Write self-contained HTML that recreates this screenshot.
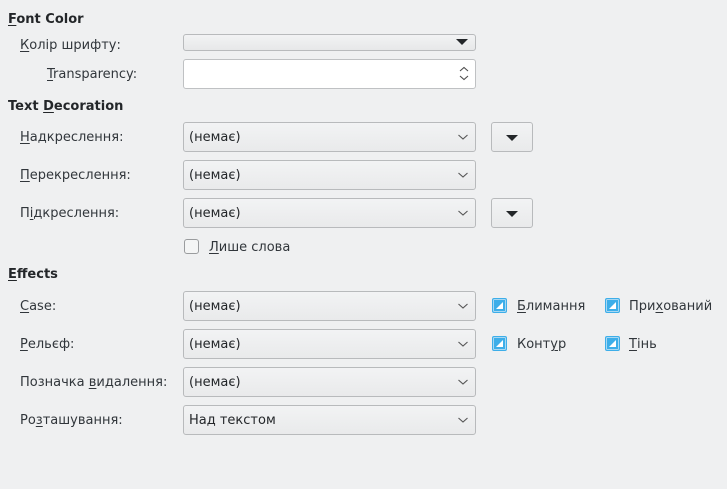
<!DOCTYPE html>
<html><head><meta charset="utf-8"><style>
body{margin:0;width:727px;height:489px;background:#eff0f1;font-family:"DejaVu Sans","Liberation Sans",sans-serif;font-size:13px;color:#31363b;position:relative;overflow:hidden}
.a{position:absolute;white-space:nowrap;line-height:16px;margin-top:2px}
.h{font-weight:bold;color:#232629}
u{text-decoration:underline;text-underline-offset:2px}
.cb{position:absolute;left:183px;width:291px;height:28px;border:1px solid #b8babc;border-radius:3px;background:linear-gradient(#f2f3f4,#e9eaeb);box-sizing:content-box}
.cb span{position:absolute;left:5px;top:7px;line-height:16px;color:#232629}
.cb svg{position:absolute;right:6px;top:10px}
.btn{position:absolute;left:491px;width:40px;height:28px;border:1px solid #b8babc;border-radius:3px;background:linear-gradient(#f2f3f4,#e9eaeb)}
.tri{position:absolute;width:0;height:0;border-left:6px solid transparent;border-right:6px solid transparent;border-top:6px solid #232629}
.ck{position:absolute;width:13px;height:13px;border:1px solid #3daee9;border-radius:2px;background:#3daee9;box-shadow:inset 0 0 0 1px #a8d8f3}
.ck:after{content:"";position:absolute;left:3px;top:3px;width:0;height:0;border-left:7px solid transparent;border-bottom:7px solid #fff}
</style></head><body>
<div class="a h" style="left:8px;top:10px"><u>F</u>ont Color</div>
<div class="a" style="left:20px;top:36px"><u>К</u>олір шрифту:</div>
<div style="position:absolute;left:183px;top:34px;width:291px;height:15px;border:1px solid #b8babc;border-radius:3px;background:linear-gradient(#f2f3f4,#e7e8e9)"></div>
<div class="tri" style="left:456px;top:39px"></div>
<div class="a" style="left:47px;top:65px"><u>T</u>ransparency:</div>
<div style="position:absolute;left:183px;top:59px;width:291px;height:28px;border:1px solid #bfc1c3;border-radius:3px;background:#fff"></div>
<svg style="position:absolute;left:458px;top:66px" width="12" height="16"><path d="M2 5 L6 1.5 L10 5 M2 10 L6 13.5 L10 10" fill="none" stroke="#4d4d4d" stroke-width="1.1"/></svg>
<div class="a h" style="left:8px;top:97px">Text <u>D</u>ecoration</div>

<div class="a" style="left:20px;top:128px"><u>Н</u>адкреслення:</div>
<div class="cb" style="top:122px"><span>(немає)</span><svg width="12" height="8"><path d="M1.5 2 L6 6 L10.5 2" fill="none" stroke="#555" stroke-width="1.1"/></svg></div>
<div class="btn" style="top:122px"><div class="tri" style="left:14px;top:12px"></div></div>

<div class="a" style="left:20px;top:166px"><u>П</u>ерекреслення:</div>
<div class="cb" style="top:160px"><span>(немає)</span><svg width="12" height="8"><path d="M1.5 2 L6 6 L10.5 2" fill="none" stroke="#555" stroke-width="1.1"/></svg></div>

<div class="a" style="left:20px;top:204px">П<u>і</u>дкреслення:</div>
<div class="cb" style="top:198px"><span>(немає)</span><svg width="12" height="8"><path d="M1.5 2 L6 6 L10.5 2" fill="none" stroke="#555" stroke-width="1.1"/></svg></div>
<div class="btn" style="top:198px"><div class="tri" style="left:14px;top:12px"></div></div>

<div style="position:absolute;left:184px;top:239px;width:13px;height:13px;border:1px solid #9a9c9e;border-radius:3px;background:#f4f5f5"></div>
<div class="a" style="left:209px;top:238px"><u>Л</u>ише слова</div>

<div class="a h" style="left:8px;top:265px"><u>E</u>ffects</div>
<div class="a" style="left:20px;top:297px"><u>C</u>ase:</div>
<div class="cb" style="top:291px"><span>(немає)</span><svg width="12" height="8"><path d="M1.5 2 L6 6 L10.5 2" fill="none" stroke="#555" stroke-width="1.1"/></svg></div>
<div class="ck" style="left:492px;top:298px"></div><div class="a" style="left:517px;top:297px"><u>Б</u>лимання</div>
<div class="ck" style="left:605px;top:298px"></div><div class="a" style="left:629px;top:297px">При<u>х</u>ований</div>

<div class="a" style="left:20px;top:335px"><u>Р</u>ельєф:</div>
<div class="cb" style="top:329px"><span>(немає)</span><svg width="12" height="8"><path d="M1.5 2 L6 6 L10.5 2" fill="none" stroke="#555" stroke-width="1.1"/></svg></div>
<div class="ck" style="left:492px;top:336px"></div><div class="a" style="left:517px;top:335px">Конт<u>у</u>р</div>
<div class="ck" style="left:605px;top:336px"></div><div class="a" style="left:629px;top:335px"><u>Т</u>інь</div>

<div class="a" style="left:20px;top:373px">Позначка <u>в</u>идалення:</div>
<div class="cb" style="top:367px"><span>(немає)</span><svg width="12" height="8"><path d="M1.5 2 L6 6 L10.5 2" fill="none" stroke="#555" stroke-width="1.1"/></svg></div>

<div class="a" style="left:20px;top:411px">Ро<u>з</u>ташування:</div>
<div class="cb" style="top:405px"><span>Над текстом</span><svg width="12" height="8"><path d="M1.5 2 L6 6 L10.5 2" fill="none" stroke="#555" stroke-width="1.1"/></svg></div>
</body></html>
